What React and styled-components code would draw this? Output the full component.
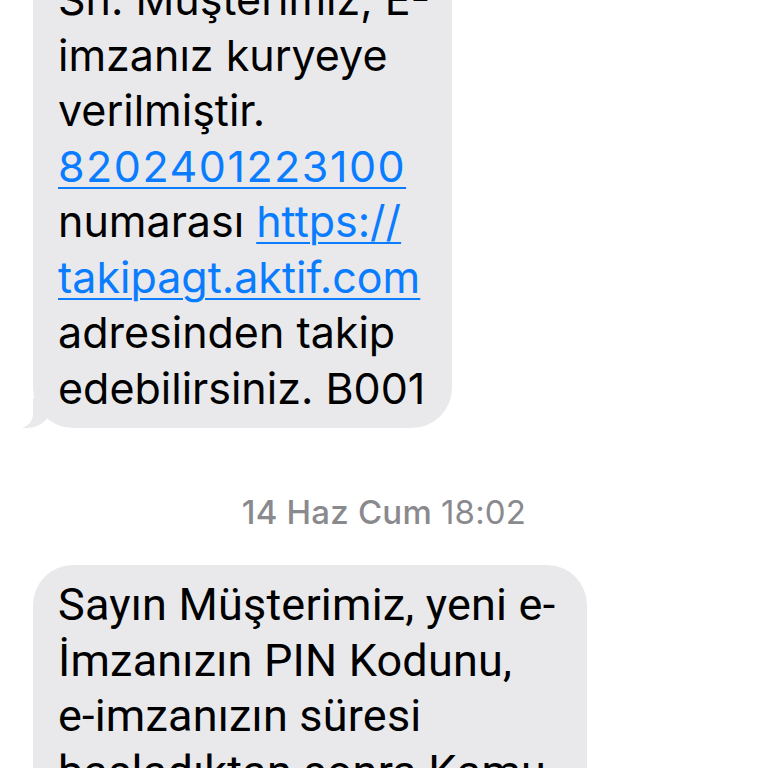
import React from 'react'
import styled, { createGlobalStyle } from 'styled-components'

const GlobalStyle = createGlobalStyle`
  html, body {
    margin: 0;
    padding: 0;
    background: #ffffff;
    overflow: hidden;
  }
`

const Thread = styled.div`
  width: 768px;
  height: 768px;
  overflow: hidden;
  display: flex;
  flex-direction: column;
  align-items: flex-start;
  padding: 0 0 0 33px;
  box-sizing: border-box;
`

const Bubble = styled.div`
  position: relative;
  box-sizing: border-box;
  width: ${p => p.$width}px;
  margin-top: ${p => p.$top || 0}px;
  padding: 12px 20px 12px 25px;
  background: #e9e9eb;
  border-radius: 40px;
  color: #000;
  font-family: ${p => p.$narrow ? '"Roboto", "Liberation Sans", sans-serif' : '"Inter", "Liberation Sans", sans-serif'};
  font-size: ${p => p.$narrow ? 45 : 43}px;
  letter-spacing: ${p => p.$narrow ? '0.2px' : '0px'};
  line-height: 55.5px;
  white-space: nowrap;

  ${p => p.$tail && `
    &::before {
      content: "";
      position: absolute;
      bottom: 0;
      left: -10px;
      width: 30px;
      height: 30px;
      background: #e9e9eb;
      border-bottom-right-radius: 26px;
    }
    &::after {
      content: "";
      position: absolute;
      bottom: 0;
      left: -30px;
      width: 30px;
      height: 30px;
      background: #ffffff;
      border-bottom-right-radius: 14px;
    }
  `}
`

const Link = styled.span`
  color: #0a7cff;
  text-decoration: underline;
  text-decoration-thickness: 2px;
  text-underline-offset: 5px;
  letter-spacing: ${p => p.$wide ? '1.5px' : '0px'};
`

const Stamp = styled.div`
  align-self: stretch;
  margin: 64px 0 33px -33px;
  text-align: center;
  font-family: "Inter", "Liberation Sans", sans-serif;
  font-size: 33px;
  line-height: 40px;
  font-weight: 500;
  color: #8a8a8e;
  letter-spacing: 0.2px;
`

const StampTime = styled.span`
  font-weight: 400;
`

const App = () => {
  return (
    <>
      <GlobalStyle />
      <Thread>
        <Bubble $width={419} $top={-40} $tail>
          Sn. Müşterimiz, E-<br />
          imzanız kuryeye<br />
          verilmiştir.<br />
          <Link $wide>8202401223100</Link><br />
          numarası <Link>https://</Link><br />
          <Link>takipagt.aktif.com</Link><br />
          adresinden takip<br />
          edebilirsiniz. B001
        </Bubble>

        <Stamp>14 Haz Cum <StampTime>18:02</StampTime></Stamp>

        <Bubble $width={554} $narrow>
          Sayın Müşterimiz, yeni e-<br />
          İmzanızın PIN Kodunu,<br />
          e-imzanızın süresi<br />
          başladıktan sonra Kamu<br />
          Sertifikasyon Merkezi
        </Bubble>
      </Thread>
    </>
  )
}

export default App
